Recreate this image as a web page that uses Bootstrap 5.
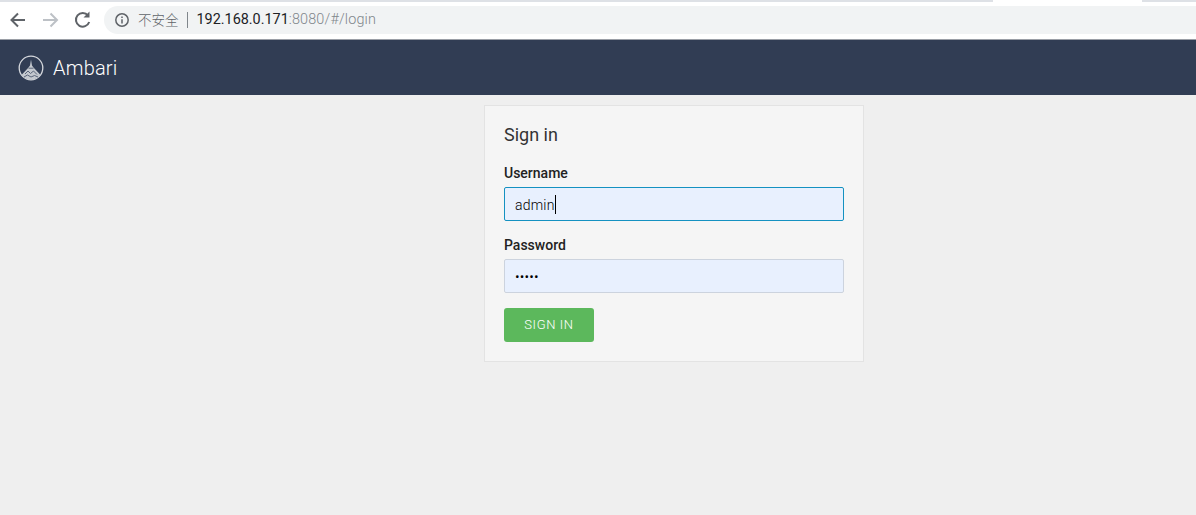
<!DOCTYPE html>
<html lang="en">
<head>
  <meta charset="UTF-8">
  <meta name="viewport" content="width=device-width, initial-scale=1">
  <title>Ambari</title>
  <link href="https://cdn.jsdelivr.net/npm/bootstrap@5.3.2/dist/css/bootstrap.min.css" rel="stylesheet">
  <style>
    html, body {
      height: 100%;
      overflow: hidden;
    }
    body {
      background-color: #efefef;
      font-family: Roboto, "Liberation Sans", sans-serif;
      color: #333;
    }
    /* browser chrome */
    .tab-strip {
      height: 2px;
      background-color: #dee1e6;
      padding-left: 993px;
    }
    .tab-active {
      width: 149px;
      height: 2px;
      background-color: #fff;
    }
    .tool-bar {
      height: 37px;
      background-color: #fff;
      padding-top: 4px;
    }
    .nav-btns {
      width: 104px;
      height: 28px;
      flex: none;
    }
    .addr-bar {
      height: 28px;
      background-color: #f1f3f4;
      border-radius: 14px 0 0 14px;
      padding-left: 10px;
      font-size: 14.4px;
      line-height: 28px;
    }
    .addr-warn {
      font-family: "Noto Sans CJK SC", sans-serif;
      font-size: 13.5px;
      font-weight: 300;
      line-height: 26px;
      height: 28px;
      color: #5f6368;
      margin-left: 8px;
    }
    .addr-sep {
      width: 1px;
      height: 16px;
      background-color: #80868b;
      margin: 0 9px 0 8px;
    }
    .addr-host {
      color: #202124;
    }
    .addr-path {
      color: #80868b;
      font-weight: 300;
      letter-spacing: .16px;
    }
    /* app */
    .app-bar {
      height: 56px;
      background-color: #313d54;
      border-top: 1px solid #9a9ea6;
      padding: 0 0 0 18px;
    }
    .app-name {
      color: #fff;
      font-size: 20px;
      font-weight: 300;
      margin-left: 9px;
      letter-spacing: .2px;
    }
    .login-box {
      width: 380px;
      height: 257px;
      margin: 10px 0 0 484px;
      padding: 19px;
      background-color: #f5f5f5;
      border: 1px solid #e3e3e3;
    }
    .login-title {
      font-size: 18px;
      font-weight: 400;
      line-height: 20px;
      margin: 0 0 20px;
      color: #333;
    }
    .login-label {
      display: block;
      font-size: 14px;
      font-weight: 500;
      line-height: 16px;
      margin-bottom: 6px;
      color: #222;
    }
    .login-input {
      height: 34px;
      padding: 1px 10px 0;
      font-size: 14px;
      font-weight: 300;
      font-family: Roboto, sans-serif;
      color: #000;
      background-color: #e8f0fe;
      border: 1px solid #ccd3de;
      border-radius: 2px;
      box-shadow: none;
      letter-spacing: .2px;
    }
    .login-input.is-focus {
      border-color: #1491c1;
    }
    .field-gap {
      margin-bottom: 16px;
    }
    .input-wrap {
      position: relative;
    }
    .fake-caret {
      position: absolute;
      left: 51px;
      top: 8px;
      width: 1px;
      height: 19px;
      background-color: #000;
    }
    .btn-signin {
      width: 90px;
      height: 34px;
      padding: 0;
      margin-top: -1px;
      font-size: 13px;
      font-weight: 300;
      letter-spacing: .6px;
      color: #fff;
      background-color: #5cb85c;
      border: 0;
      border-radius: 3px;
    }
  </style>
</head>
<body>

<!-- Browser chrome -->
<div class="tab-strip"><div class="tab-active"></div></div>
<div class="tool-bar d-flex">
  <div class="nav-btns">
    <svg width="104" height="28" viewBox="0 0 104 28" fill="none">
      <path d="M25 14H12M18 7.5L11.5 14L18 20.5" stroke="#5f6368" stroke-width="2"/>
      <path d="M43 14H56.5M50.5 7.5L57 14L50.5 20.5" stroke="#bdc1c6" stroke-width="2"/>
      <path d="M88 9.5A6.8 6.8 0 1 0 89.2 16" stroke="#5f6368" stroke-width="2"/>
      <path d="M89.5 5.5V11.5H83.5Z" fill="#5f6368"/>
    </svg>
  </div>
  <div class="addr-bar flex-grow-1 d-flex align-items-center">
    <svg width="16" height="16" viewBox="0 0 16 16" fill="none">
      <circle cx="8" cy="8" r="6.2" stroke="#5f6368" stroke-width="1.5"/>
      <path d="M8 7.2V11.5M8 4.6V6" stroke="#5f6368" stroke-width="1.5"/>
    </svg>
    <span class="addr-warn">不安全</span>
    <span class="addr-sep"></span>
    <span><span class="addr-host">192.168.0.171</span><span class="addr-path">:8080/#/login</span></span>
  </div>
</div>

<!-- Top bar -->
<div class="app-bar d-flex align-items-center">
  <svg width="26" height="26" viewBox="0 0 26 26" fill="none">
    <circle cx="13" cy="13" r="11.8" stroke="#d5d8dd" stroke-width="1.3"/>
    <path d="M13 4.5L14 10.5L15.5 12.5L22.5 20A11.8 11.8 0 0 1 3.5 20L10.5 12.5L12 10.5Z" fill="#c4c8ce"/>
    <path d="M7 19L10 16L12.5 18.5L15.5 16L19 19.5M6 22L9.5 20L13 22L16.5 20.5L20 22" stroke="#5a6579" stroke-width="1"/>
    <path d="M10.5 13.2H15.5" stroke="#5a6579" stroke-width="1"/>
  </svg>
  <span class="app-name">Ambari</span>
</div>

<!-- Login form -->
<div class="login-box">
  <h4 class="login-title">Sign in</h4>
  <form>
    <div class="field-gap">
      <label class="login-label" for="username">Username</label>
      <div class="input-wrap">
        <input type="text" id="username" class="form-control login-input is-focus" value="admin">
        <span class="fake-caret"></span>
      </div>
    </div>
    <div class="field-gap">
      <label class="login-label" for="password">Password</label>
      <input type="password" id="password" class="form-control login-input" value="admin">
    </div>
    <button type="button" class="btn btn-signin">SIGN IN</button>
  </form>
</div>

<script src="https://cdn.jsdelivr.net/npm/bootstrap@5.3.2/dist/js/bootstrap.bundle.min.js"></script>
</body>
</html>
